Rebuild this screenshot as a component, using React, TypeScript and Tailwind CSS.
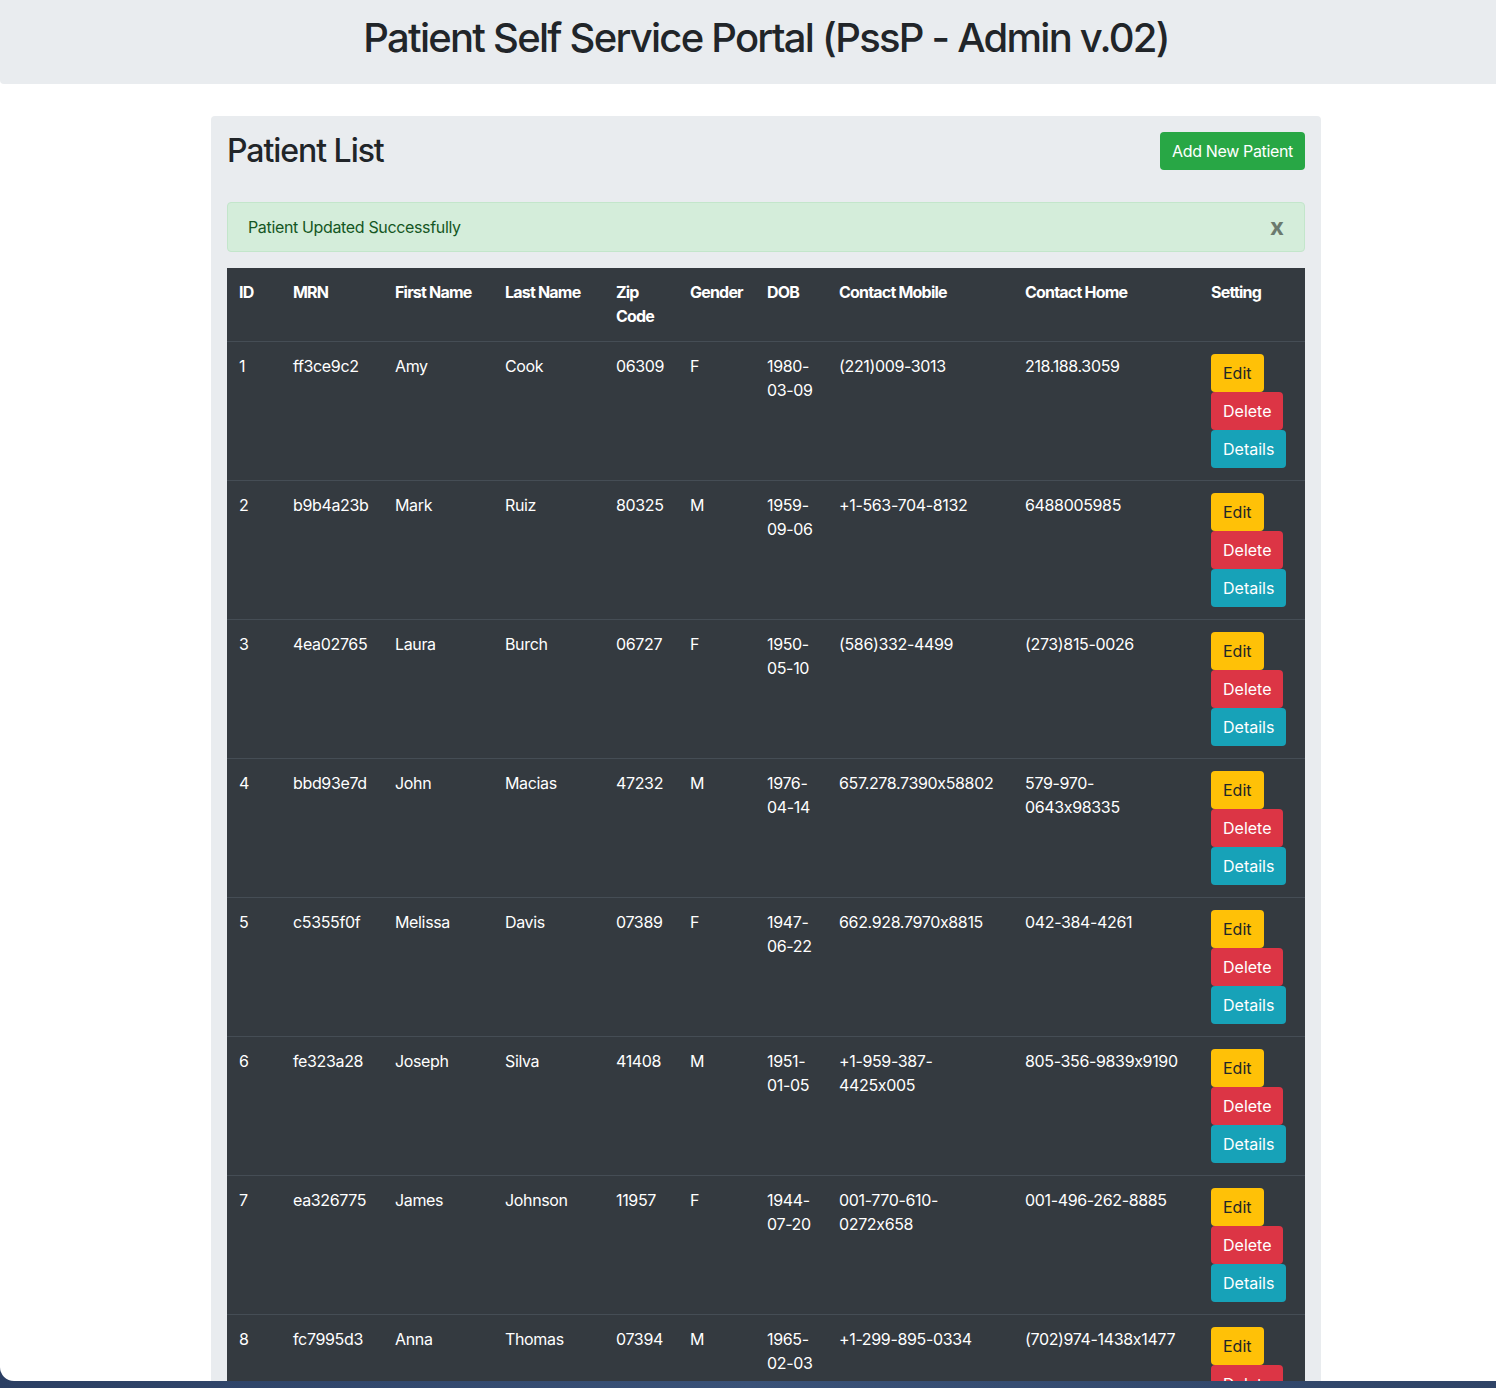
import React from "react";

const rows = [
  ["1", "ff3ce9c2", "Amy", "Cook", "06309", "F", "1980-03-09", "(221)009-3013", "218.188.3059"],
  ["2", "b9b4a23b", "Mark", "Ruiz", "80325", "M", "1959-09-06", "+1-563-704-8132", "6488005985"],
  ["3", "4ea02765", "Laura", "Burch", "06727", "F", "1950-05-10", "(586)332-4499", "(273)815-0026"],
  ["4", "bbd93e7d", "John", "Macias", "47232", "M", "1976-04-14", "657.278.7390x58802", "579-970-0643x98335"],
  ["5", "c5355f0f", "Melissa", "Davis", "07389", "F", "1947-06-22", "662.928.7970x8815", "042-384-4261"],
  ["6", "fe323a28", "Joseph", "Silva", "41408", "M", "1951-01-05", "+1-959-387-4425x005", "805-356-9839x9190"],
  ["7", "ea326775", "James", "Johnson", "11957", "F", "1944-07-20", "001-770-610-0272x658", "001-496-262-8885"],
  ["8", "fc7995d3", "Anna", "Thomas", "07394", "M", "1965-02-03", "+1-299-895-0334", "(702)974-1438x1477"],
];

const headers = ["ID", "MRN", "First Name", "Last Name", "Zip Code", "Gender", "DOB", "Contact Mobile", "Contact Home", "Setting"];
const widths = ["w-[54px]", "w-[102px]", "w-[110px]", "w-[111px]", "w-[74px]", "w-[77px]", "w-[72px]", "w-[186px]", "w-[186px]", "w-[106px]"];

export default function App() {
  return (
    <div
      className="w-[1496px] h-[1388px] overflow-hidden bg-gradient-to-r from-[#2b3f63] via-[#3a5278] to-[#2f4467] [font-feature-settings:'calt'_0]"
      style={{ fontFamily: "Inter, 'Noto Sans', sans-serif" }}
    >
      <div className="h-[1381px] w-[1496px] overflow-hidden bg-white rounded-bl-[14px]">
        <div className="w-[1532px]">
          <header className="bg-[#e9ecef] rounded-bl-[4px] pt-[14px] pb-[22px] text-center">
            <h1 className="text-[40px] leading-[48px] font-medium text-[#212529] tracking-[-1.75px]">
              Patient Self Service Portal (PssP - Admin v.02)
            </h1>
          </header>
          <main className="mx-auto mt-8 w-[1110px] bg-[#e9ecef] rounded-[4px] p-4 text-[16px] leading-6 tracking-[-0.35px]">
            <div className="flex items-center justify-between mb-8">
              <h2 className="text-[32px] leading-[38px] font-medium text-[#212529] tracking-[-1.05px]">Patient List</h2>
              <button className="bg-[#28a745] text-white px-3 py-[7px] rounded-[4px] text-[16px] leading-6">
                Add New Patient
              </button>
            </div>
            <div className="flex items-center justify-between bg-[#d4edda] border border-[#c3e6cb] text-[#155724] rounded-[4px] py-3 px-5 mb-4">
              <span>Patient Updated Successfully</span>
              <span className="text-[24px] leading-6 font-bold text-[#6b7a6e] tracking-normal">x</span>
            </div>
            <table className="w-full table-fixed bg-[#343a40] text-white border-collapse">
              <thead>
                <tr>
                  {headers.map((h, i) => (
                    <th key={h} className={`${widths[i]} text-left align-top font-bold px-3 pt-3 pb-[13px] tracking-[-0.8px]`}>
                      {h}
                    </th>
                  ))}
                </tr>
              </thead>
              <tbody>
                {rows.map((r) => (
                  <tr key={r[0]} className="border-t border-[#454d55]">
                    {r.map((c, i) => (
                      <td key={i} className="align-top p-3">
                        {c}
                      </td>
                    ))}
                    <td className="align-top p-3">
                      <div className="flex flex-col items-start tracking-normal">
                        <button className="bg-[#ffc107] text-[#212529] px-3 py-[7px] rounded-[4px] leading-6">Edit</button>
                        <button className="bg-[#dc3545] text-white px-3 py-[7px] rounded-[4px] leading-6">Delete</button>
                        <button className="bg-[#17a2b8] text-white px-3 py-[7px] rounded-[4px] leading-6">Details</button>
                      </div>
                    </td>
                  </tr>
                ))}
              </tbody>
            </table>
          </main>
        </div>
      </div>
    </div>
  );
}
